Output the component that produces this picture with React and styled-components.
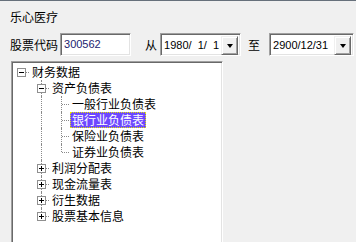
import React from 'react';
import styled, { createGlobalStyle } from 'styled-components';

const GlobalStyle = createGlobalStyle`
    html, body {
        margin: 0;
        padding: 0;
        background: #f0f0f0;
        overflow: hidden;
    }
    body {
        font-family: 'Noto Sans CJK SC', 'Noto Sans', sans-serif;
        font-size: 12px;
        color: #000;
    }
`;

const Window = styled.div`
    width: 356px;
    height: 242px;
    box-sizing: border-box;
    border-top: 1px solid #66707b;
    padding: 8px 0 0 10px;
    display: flex;
    flex-direction: column;
    overflow: hidden;
`;

const Title = styled.div`
    height: 16px;
    line-height: 16px;
`;

const ControlRow = styled.div`
    margin-top: 8px;
    height: 23px;
    display: flex;
    align-items: center;
`;

const Caption = styled.span`
    line-height: 16px;
    margin-left: ${(p) => p.$gap || 0}px;
`;

const sunken = `
    box-sizing: border-box;
    background: #fff;
    border: 1px solid;
    border-color: #a0a0a0 #ffffff #ffffff #a0a0a0;
    box-shadow: inset 1px 1px #696969, inset -1px -1px #e3e3e3;
`;

const CodeInput = styled.div`
    ${sunken}
    width: 71px;
    height: 23px;
    margin-left: 2px;
    padding: 2px 3px;
    font-family: 'Liberation Sans', Arial, sans-serif;
    font-size: 11px;
    line-height: 17px;
    color: #1c2470;
`;

const Combo = styled.div`
    ${sunken}
    width: ${(p) => p.$w}px;
    height: 23px;
    margin-left: ${(p) => p.$gap}px;
    padding: 2px;
    display: flex;
`;

const ComboText = styled.span`
    flex: 1;
    padding-left: 1px;
    font-family: 'Liberation Sans', Arial, sans-serif;
    font-size: 11px;
    line-height: 19px;
    white-space: pre;
    overflow: hidden;
`;

const DropButton = styled.span`
    width: 17px;
    height: 19px;
    box-sizing: border-box;
    background: #f0f0f0;
    border: 1px solid;
    border-color: #f0f0f0 #696969 #696969 #f0f0f0;
    box-shadow: inset 1px 1px #ffffff, inset -1px -1px #a0a0a0;
    display: flex;
    align-items: center;
    justify-content: center;
    &::after {
        content: '';
        border-left: 3.5px solid transparent;
        border-right: 3.5px solid transparent;
        border-top: 4px solid #000;
        margin-top: 1px;
    }
`;

const TreePanel = styled.div`
    margin-top: 5px;
    margin-left: 1px;
    width: 212px;
    height: 220px;
    flex-shrink: 0;
    box-sizing: border-box;
    background: #fff;
    border: 1px solid;
    border-color: #a0a0a0 #ffffff #ffffff #a0a0a0;
    box-shadow: inset 1px 1px #696969, inset -1px -1px #e3e3e3;
    padding: 2px 0 0 1px;
`;

const TreeRow = styled.div`
    display: flex;
    height: 16px;
`;

const Guide = styled.span`
    position: relative;
    width: ${(p) => p.$w}px;
    height: 16px;
    flex-shrink: 0;
    &::before {
        content: '';
        display: ${(p) => (p.$up || p.$down ? 'block' : 'none')};
        position: absolute;
        left: 8px;
        top: ${(p) => (p.$up ? 0 : 8)}px;
        bottom: ${(p) => (p.$down ? 0 : 8)}px;
        border-left: 1px dotted #8a8a8a;
    }
    &::after {
        content: '';
        display: ${(p) => (p.$across ? 'block' : 'none')};
        position: absolute;
        left: 9px;
        right: 1px;
        top: 8px;
        border-top: 1px dotted #8a8a8a;
    }
`;

const ExpanderBox = styled.svg`
    position: absolute;
    left: 4px;
    top: 4px;
    z-index: 1;
`;

const Label = styled.span`
    height: 16px;
    line-height: 16px;
    padding: 0 2px;
    white-space: nowrap;
    background: ${(p) => (p.$selected ? '#6d48ff' : 'transparent')};
    color: ${(p) => (p.$selected ? '#fff' : '#000')};
    outline: ${(p) => (p.$selected ? '1px dotted #e6e600' : 'none')};
    outline-offset: -1px;
`;

const Expander = ({ open }) => (
    <ExpanderBox width="9" height="9" viewBox="0 0 9 9" shapeRendering="crispEdges">
        <rect x="0.5" y="0.5" width="8" height="8" fill="#fff" stroke="#8f8f8f" />
        <path d="M2 4.5h5" stroke="#000" />
        {!open && <path d="M4.5 2v5" stroke="#000" />}
    </ExpanderBox>
);

const rows = [
    { label: '财务数据', exp: 'open', anc: [], up: false, down: false },
    { label: '资产负债表', exp: 'open', anc: [false], up: true, down: true },
    { label: '一般行业负债表', anc: [false, true], up: true, down: true },
    { label: '银行业负债表', anc: [false, true], up: true, down: true, selected: true },
    { label: '保险业负债表', anc: [false, true], up: true, down: true },
    { label: '证券业负债表', anc: [false, true], up: true, down: false },
    { label: '利润分配表', exp: 'closed', anc: [false], up: true, down: true },
    { label: '现金流量表', exp: 'closed', anc: [false], up: true, down: true },
    { label: '衍生数据', exp: 'closed', anc: [false], up: true, down: true },
    { label: '股票基本信息', exp: 'closed', anc: [false], up: true, down: false },
];

const App = () => (
    <>
        <GlobalStyle />
        <Window>
            <Title>乐心医疗</Title>
            <ControlRow>
                <Caption>股票代码</Caption>
                <CodeInput>300562</CodeInput>
                <Caption $gap={14}>从</Caption>
                <Combo $w={81} $gap={3}>
                    <ComboText>1980/  1/  1</ComboText>
                    <DropButton />
                </Combo>
                <Caption $gap={7}>至</Caption>
                <Combo $w={85} $gap={9}>
                    <ComboText>2900/12/31</ComboText>
                    <DropButton />
                </Combo>
            </ControlRow>
            <TreePanel>
                {rows.map((r) => (
                    <TreeRow key={r.label}>
                        {r.anc.map((cont, i) => (
                            <Guide key={i} $w={20} $up={cont} $down={cont} />
                        ))}
                        <Guide $w={17} $up={r.up} $down={r.down} $across>
                            {r.exp && <Expander open={r.exp === 'open'} />}
                        </Guide>
                        <Label $selected={r.selected}>{r.label}</Label>
                    </TreeRow>
                ))}
            </TreePanel>
        </Window>
    </>
);

export default App;
